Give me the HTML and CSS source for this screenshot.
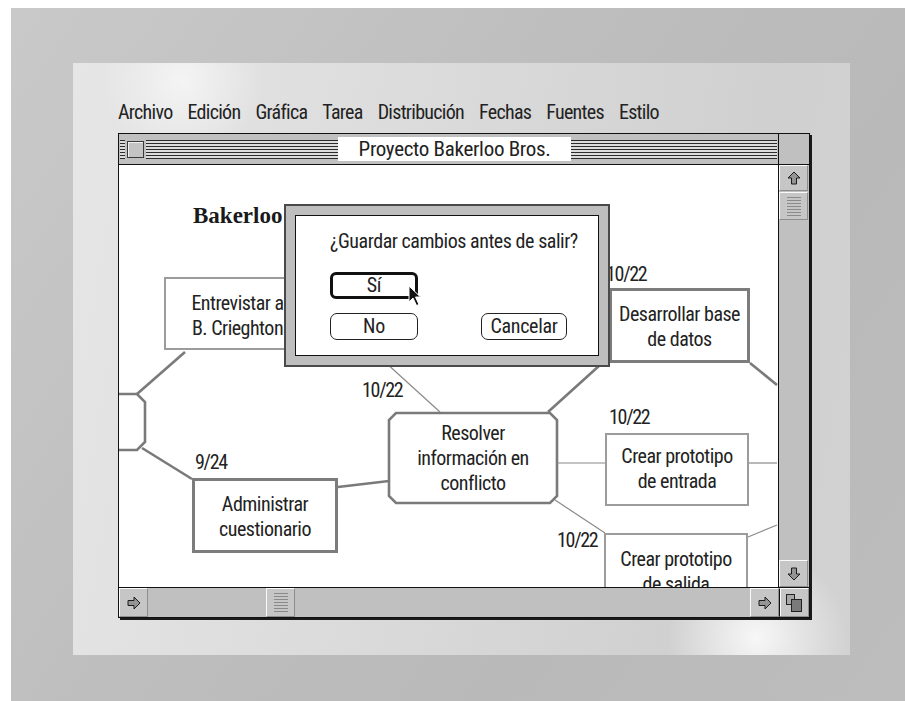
FILE: index.html
```html
<!DOCTYPE html>
<html lang="es">
	<head>
		<title>Proyecto Bakerloo Bros.</title>
		<meta charset="utf-8">
		<meta name="viewport" content="width=device-width, initial-scale=1">
		<link rel="stylesheet" href="styles.css">
	</head>
	<body>
		<div class="frame">
			<div class="panel">

				<nav class="menu">
					<span>Archivo</span>
					<span>Edición</span>
					<span>Gráfica</span>
					<span>Tarea</span>
					<span>Distribución</span>
					<span>Fechas</span>
					<span>Fuentes</span>
					<span>Estilo</span>
				</nav>

				<div class="window">

					<div class="titlebar">
						<div class="title-stripes">
							<span class="close-box"></span>
							<span class="title">Proyecto Bakerloo Bros.</span>
						</div>
						<div class="title-corner"></div>
					</div>

					<div class="win-body">
						<div class="canvas">
							<svg class="links" width="659" height="422" viewBox="0 0 659 422">
								<g class="thick">
									<line x1="66" y1="187" x2="18" y2="229"/>
									<line x1="23" y1="283" x2="73" y2="314"/>
									<line x1="219" y1="322" x2="270" y2="316"/>
									<line x1="429" y1="247" x2="481" y2="200"/>
									<line x1="631" y1="198" x2="658" y2="220"/>
									<polygon points="-5,229 18,229 26,237 26,277 18,285 -5,285"/>
									<polygon points="277,248 431,248 438,255 438,331 431,338 277,338 270,331 270,255"/>
								</g>
								<g class="thin">
									<line x1="266" y1="197" x2="321" y2="247"/>
									<line x1="438" y1="298" x2="486" y2="298"/>
									<line x1="630" y1="298" x2="658" y2="298"/>
									<line x1="436" y1="335" x2="486" y2="368"/>
									<line x1="629" y1="372" x2="658" y2="360"/>
								</g>
							</svg>

							<h1 class="chart-title">Bakerloo Bros.</h1>

							<div class="node thin n-entrevistar">Entrevistar a<br>B. Crieghton</div>
							<div class="node thick n-administrar">Administrar<br>cuestionario</div>
							<div class="node octo n-resolver">Resolver<br>información en<br>conflicto</div>
							<div class="node thick n-desarrollar">Desarrollar base<br>de datos</div>
							<div class="node thin n-entrada">Crear prototipo<br>de entrada</div>
							<div class="node thin n-salida">Crear prototipo<br>de salida</div>

							<span class="date d-resolver">10/22</span>
							<span class="date d-administrar">9/24</span>
							<span class="date d-desarrollar">10/22</span>
							<span class="date d-entrada">10/22</span>
							<span class="date d-salida">10/22</span>

							<div class="dialog">
								<div class="dialog-body">
									<p class="question">¿Guardar cambios antes de salir?</p>
									<button class="btn btn-default">Sí</button>
									<div class="btn-row">
										<button class="btn">No</button>
										<button class="btn btn-cancel">Cancelar</button>
									</div>
								</div>
							</div>

							<svg class="cursor" width="16" height="22" viewBox="0 0 16 22">
								<path d="M1 1 L1 17 L5 13 L8.5 20.5 L11 19.5 L7.5 12 L12.5 12 Z" fill="#111" stroke="#fff" stroke-width="1"/>
							</svg>
						</div>

						<div class="vscroll">
							<div class="sbox">
								<svg width="14" height="14" viewBox="0 0 14 14"><path d="M7 1 L13 7 L9.5 7 L9.5 13 L4.5 13 L4.5 7 L1 7 Z"/></svg>
							</div>
							<div class="vtrack"><div class="thumb"></div></div>
							<div class="sbox">
								<svg width="14" height="14" viewBox="0 0 14 14"><path d="M7 13 L13 7 L9.5 7 L9.5 1 L4.5 1 L4.5 7 L1 7 Z"/></svg>
							</div>
						</div>
					</div>

					<div class="hscroll">
						<div class="sbox">
							<svg width="14" height="14" viewBox="0 0 14 14"><path d="M13 7 L7 1 L7 4.5 L1 4.5 L1 9.5 L7 9.5 L7 13 Z"/></svg>
						</div>
						<div class="htrack"><div class="thumb"></div></div>
						<div class="sbox">
							<svg width="14" height="14" viewBox="0 0 14 14"><path d="M13 7 L7 1 L7 4.5 L1 4.5 L1 9.5 L7 9.5 L7 13 Z"/></svg>
						</div>
						<div class="size-box">
							<svg width="18" height="20" viewBox="0 0 18 20">
								<rect x="1.5" y="1.5" width="8" height="10" fill="#a8a8a8" stroke="#222"/>
								<rect x="6.5" y="6.5" width="10" height="12" fill="#7a7a7a" stroke="#222"/>
							</svg>
						</div>
					</div>

				</div>
			</div>
		</div>
	</body>
</html>
```

FILE: styles.css
```css
/*
 * RESET
 */
* { margin: 0; padding: 0; box-sizing: border-box; }
svg { display: block; }
button { border: none; background: none; font: inherit; color: inherit; letter-spacing: inherit; }

/*
 * FONTS
 */
body, button {
	font-family: "Liberation Sans Narrow", "Arial Narrow", "Roboto Condensed", "DejaVu Sans Condensed", sans-serif;
	color: #222;
}
.chart-title { font-family: "Liberation Serif", "Times New Roman", serif; }

/*
 * LAYOUT
 * body > .frame > .panel > .menu + .window
 * .window > .titlebar + .win-body (.canvas + .vscroll) + .hscroll
 */
body { background: #fff; }

.frame {
	margin: 8px 0 0 11px;
	padding: 55px 55px 46px 62px;
	background: linear-gradient(125deg, #c9c9c9 0%, #bdbdbd 45%, #b9b9b9 70%, #bdbdbd 100%);
}
.panel {
	width: 777px; height: 592px;
	padding: 37px 0 0 45px;
	background:
		radial-gradient(circle at 14% 3%, #f4f4f4 0, rgba(244,244,244,0) 80px),
		radial-gradient(circle at 88% 97%, #f7f7f7 0, rgba(247,247,247,0) 90px),
		linear-gradient(100deg, #e6e6e6 0%, #dadada 45%, #d0d0d0 80%, #d2d2d2 100%);
}

.menu {
	display: flex; gap: 15px;
	height: 24px;
	font-size: 20px; line-height: 25px;
	letter-spacing: -0.7px;
}

.window {
	margin-top: 9px;
	width: 692px;
	border: 1px solid #111;
	box-shadow: 2px 2px 0 #1a1a1a;
	background: #c0c0c0;
}

/* title bar */
.titlebar { display: flex; height: 31px; border-bottom: 1px solid #111; }
.title-stripes {
	width: 659px;
	display: flex; align-items: center;
	padding-left: 8px;
	background:
		repeating-linear-gradient(to bottom, #2c2c2c 0 1px, #dcdcdc 1px 3px) 1px 6px / 657px 19px no-repeat,
		#c0c0c0;
}
.close-box {
	width: 17px; height: 17px;
	border: 1px solid #3a3a3a;
	background: #c4c4c4;
	box-shadow: inset 1px 1px 0 #f2f2f2, 0 0 0 2px #c0c0c0;
}
.title {
	margin-left: 194px;
	width: 233px; height: 24px;
	background: #fff;
	text-align: center;
	font-size: 21px; line-height: 25px;
	letter-spacing: -0.3px;
	white-space: nowrap;
}
.title-corner { width: 30px; border-left: 1px solid #111; background: #c0c0c0; }

/* body */
.win-body { display: flex; height: 422px; }
.canvas {
	position: relative;
	width: 659px; height: 422px;
	overflow: hidden;
	background: #fff;
}

/* scroll bars */
.vscroll {
	width: 30px;
	border-left: 1px solid #111;
	display: flex; flex-direction: column;
}
.vscroll .sbox:first-child { height: 26px; }
.vscroll .sbox:last-child { height: 27px; }
.vtrack { flex: 1; padding-top: 1px; }
.vtrack .thumb { height: 28px; }

.hscroll {
	display: flex; height: 30px;
	border-top: 1px solid #111;
}
.hscroll .sbox { width: 29px; }
.htrack { flex: 1; padding-left: 118px; }
.htrack .thumb { width: 29px; height: 29px; }

.sbox, .thumb, .size-box {
	display: flex; align-items: center; justify-content: center;
	background-color: #c6c6c6;
	border-top: 1px solid #fafafa; border-left: 1px solid #fafafa;
	border-right: 1px solid #8e8e8e; border-bottom: 1px solid #8e8e8e;
}
.sbox path { fill: #949494; stroke: #1c1c1c; stroke-width: 1; stroke-linejoin: miter; }
.thumb {
	background-image: repeating-linear-gradient(to bottom, #8a8a8a 0 1px, transparent 1px 3px);
	background-size: 14px 19px;
	background-position: center;
	background-repeat: no-repeat;
}
.size-box { width: 30px; border-left: 1px solid #111; box-shadow: inset 1px 0 0 #fafafa; }

/*
 * DIAGRAM
 */
.links { position: absolute; top: 0; left: 0; }
.links .thick line, .links .thick polygon { stroke: #7a7a7a; stroke-width: 2.6; fill: #fff; }
.links .thin line { stroke: #8a8a8a; stroke-width: 1.2; }

.chart-title {
	position: absolute; left: 74px; top: 37px;
	font-size: 23px; line-height: 28px; font-weight: bold;
	color: #1a1a1a;
	white-space: nowrap;
}

.node {
	position: absolute;
	font-size: 20px; line-height: 25px;
	letter-spacing: -0.5px;
	text-align: center; white-space: nowrap;
	background: #fff;
	padding-top: 11px;
}
.node.thin { border: 2px solid #9c9c9c; }
.node.thick { border: 3px solid #7c7c7c; }
.node.octo { background: none; padding-top: 8px; }

.n-entrevistar { left: 45px; top: 112px; width: 147px; height: 73px; padding-top: 12px; }
.n-administrar { left: 73px; top: 313px; width: 146px; height: 75px; }
.n-resolver { left: 270px; top: 248px; width: 168px; height: 90px; }
.n-desarrollar { left: 490px; top: 123px; width: 141px; height: 75px; }
.n-entrada { left: 486px; top: 268px; width: 144px; height: 73px; padding-top: 9px; }
.n-salida { left: 485px; top: 368px; width: 144px; height: 75px; padding-top: 12px; }

.date {
	position: absolute;
	font-size: 20px; line-height: 24px;
	letter-spacing: -1.3px;
}
.d-resolver { left: 243px; top: 213px; }
.d-administrar { left: 76px; top: 285px; }
.d-desarrollar { left: 487px; top: 97px; }
.d-entrada { left: 490px; top: 240px; }
.d-salida { left: 438px; top: 363px; }

/*
 * DIALOG
 */
.dialog {
	position: absolute; left: 165px; top: 39px;
	width: 326px; height: 163px;
	border: 2px solid #4a4a4a;
	background: #bebebe;
	padding: 9px;
}
.dialog-body {
	height: 100%;
	border: 1px solid #111;
	background: #fff;
	padding: 13px 0 0 34px;
}
.question { font-size: 20px; line-height: 24px; letter-spacing: -0.45px; white-space: nowrap; }
.btn {
	display: block;
	width: 88px; height: 27px;
	font-size: 20px; line-height: 23px;
	letter-spacing: -0.3px;
	border: 1px solid #222; border-radius: 7px;
	text-align: center;
}
.btn-default { margin-top: 19px; border: 3px solid #111; border-radius: 6px; line-height: 21px; }
.btn-row { display: flex; gap: 63px; margin-top: 14px; }
.btn-cancel { width: 86px; }

.cursor { position: absolute; left: 289px; top: 120px; }
```
